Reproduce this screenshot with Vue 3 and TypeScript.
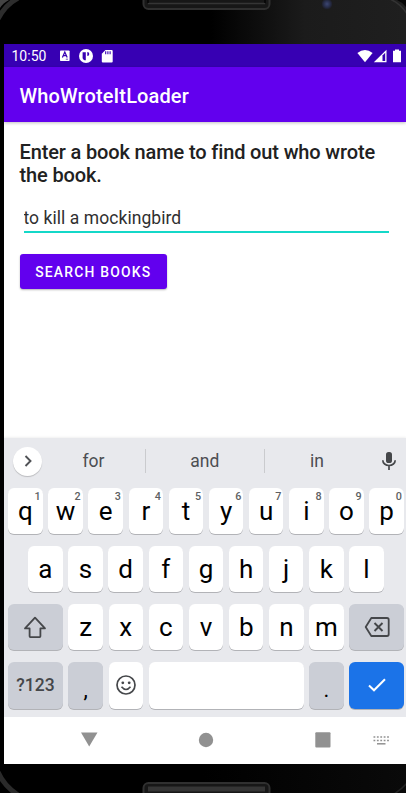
<script setup lang="ts">
import { ref } from 'vue'

interface Key {
  label: string
  hint?: string
}

const bookName = ref('to kill a mockingbird')
const suggestions: string[] = ['for', 'and', 'in']
const topRow: Key[] = [...'qwertyuiop'].map((label, i) => ({ label, hint: String((i + 1) % 10) }))
const middleRow: string[] = [...'asdfghjkl']
const bottomRow: string[] = [...'zxcvbnm']
</script>

<template>
  <div class="device">
    <svg class="frame" viewBox="0 0 406 793" aria-hidden="true">
      <defs>
        <linearGradient id="bezel" x1="0" x2="1">
          <stop offset="0.52" stop-color="#000" />
          <stop offset="0.75" stop-color="#1b1b1b" />
          <stop offset="1" stop-color="#1f1f1f" />
        </linearGradient>
        <linearGradient id="chin" x1="0" x2="1">
          <stop offset="0.5" stop-color="#000" />
          <stop offset="1" stop-color="#0a0a0a" />
        </linearGradient>
        <radialGradient id="lens">
          <stop offset="0" stop-color="#3c4672" />
          <stop offset="0.6" stop-color="#272d49" />
          <stop offset="1" stop-color="#1c1c22" />
        </radialGradient>
      </defs>
      <rect width="406" height="793" fill="#000" />
      <rect width="406" height="44" fill="url(#bezel)" />
      <rect y="764" width="406" height="29" fill="url(#chin)" />
      <path d="M-2 19Q5 5 18-2" fill="none" stroke="#2d2d2d" stroke-width="5" />
      <path d="M0 0h9Q3 3 0 8z" fill="#444" />
      <path d="M390-1Q401 4 407 14" fill="none" stroke="#333" stroke-width="1.5" />
      <path d="M397 0h9v7Q402 2 397 0z" fill="#050505" />
      <path d="M-2 772Q4 786 18 795" fill="none" stroke="#2a2a2a" stroke-width="5" />
      <path d="M407 783Q402 789 394 794" fill="none" stroke="#222" stroke-width="1.5" />
      <rect x="143.5" y="-10" width="126" height="19" rx="5" fill="#171717" stroke="#303030" stroke-width="2" />
      <path d="M148 3.5h117" stroke="#353535" stroke-width="1.5" />
      <path d="M148 0v3M265 0v3" stroke="#050505" stroke-width="1.5" />
      <rect x="143.5" y="783" width="126" height="18" rx="5" fill="#171717" stroke="#303030" stroke-width="2" />
      <rect x="148" y="786.5" width="117" height="5" fill="#353535" />
      <circle cx="327" cy="4" r="5.5" fill="url(#lens)" />
    </svg>

    <main class="screen">
      <div class="status-bar">
        <span class="clock">10:50</span>
        <svg class="notify" viewBox="0 0 56 16">
          <rect x="1" y="2.5" width="9.6" height="10.5" rx="0.8" fill="#fff" />
          <path d="M3.4 9.6L5.8 4l2.4 5.6M4.4 7.7h2.9" fill="none" stroke="#3700b3" stroke-width="1.2" />
          <path d="M6.8 11.2h2.2" stroke="#3700b3" stroke-width="0.7" />
          <circle cx="27" cy="8" r="7" fill="#fff" />
          <path d="M23.6 4.3h3.2v7.9h-1.3a4 4 0 0 1-1.9-2zM28.3 4a2 2 0 1 1 0 4z" fill="#3700b3" />
          <path d="M46.5 2h6.2q1 0 1 1v10.4q0 1-1 1h-8.9q-1 0-1-1V5.7z" fill="#fff" />
          <path d="M46.7 3.3v2.9M48.9 3.3v2.9M51.1 3.3v2.9" stroke="#3700b3" stroke-width="1.1" />
        </svg>
        <svg class="signals" viewBox="0 0 46 16">
          <path d="M1.4 5Q9 -0.8 16.6 5L9 14.3z" fill="#fff" />
          <path d="M30.5 1.700V14.300H17.800z" fill="#fff" />
          <path d="M26.500 7.500l2.700-2.800v8.400h-2.700z" fill="#3700b3" />
          <path d="M37 2.700h2V1.500h4v1.200h2v11.600h-8z" fill="#fff" />
        </svg>
      </div>
      <header class="app-bar"><h1>WhoWroteItLoader</h1></header>

      <section class="content">
        <h2>Enter a book name to find out who wrote the book.</h2>
        <input v-model="bookName" class="book-input" type="text" spellcheck="false" />
        <button class="search" type="button">SEARCH BOOKS</button>
      </section>

      <section class="keyboard">
        <div class="suggestions">
          <span class="expand">
            <svg width="12" height="14" viewBox="0 0 12 14"><path d="M3.5 2L8.5 7l-5 5" fill="none" stroke="#505256" stroke-width="1.9" /></svg>
          </span>
          <div class="words">
            <span v-for="word in suggestions" :key="word" class="word">{{ word }}</span>
          </div>
          <svg class="mic" width="16" height="20" viewBox="0 0 16 20">
            <rect x="5" y="1" width="6" height="11" rx="2.6" fill="#45474a" />
            <path d="M1.8 9.3a6.2 5.2 0 0 0 12.4 0M8 14.5V19" fill="none" stroke="#45474a" stroke-width="1.7" />
          </svg>
        </div>

        <div class="row">
          <span v-for="key in topRow" :key="key.label" class="key">{{ key.label }}<small>{{ key.hint }}</small></span>
        </div>
        <div class="row inset">
          <span v-for="letter in middleRow" :key="letter" class="key">{{ letter }}</span>
        </div>
        <div class="row">
          <span class="key wide muted">
            <svg width="24" height="24" viewBox="0 0 24 24"><path d="M12 2.7L22 13.4h-4.600v7.900q0 .8-.8.8H7.400q-.8 0-.8-.8v-7.900H2z" fill="none" stroke="#45474a" stroke-width="1.8" stroke-linejoin="round" /></svg>
          </span>
          <span v-for="letter in bottomRow" :key="letter" class="key">{{ letter }}</span>
          <span class="key wide muted">
            <svg width="26" height="22" viewBox="0 0 26 22"><path d="M7.300 2H23q1.700 0 1.700 1.700v14.600Q24.700 20 23 20H7.300L1.700 11z" fill="none" stroke="#45474a" stroke-width="1.800" stroke-linejoin="round" /><path d="M10.500 7l8 8m0-8l-8 8" stroke="#45474a" stroke-width="1.900" /></svg>
          </span>
        </div>
        <div class="row last">
          <span class="key wide muted symbols">?123</span>
          <span class="key muted punctuation">,</span>
          <span class="key">
            <svg width="22" height="22" viewBox="0 0 22 22"><circle cx="11" cy="11" r="9" fill="none" stroke="#45474a" stroke-width="1.700" /><circle cx="7.800" cy="8.800" r="1.400" fill="#45474a" /><circle cx="14.200" cy="8.800" r="1.400" fill="#45474a" /><path d="M6.500 12.800q4.500 5.500 9 0" fill="none" stroke="#45474a" stroke-width="1.600" /></svg>
          </span>
          <span class="key space"></span>
          <span class="key muted punctuation">.</span>
          <span class="key wide enter">
            <svg width="20" height="16" viewBox="0 0 20 16"><path d="M2 8.500l5 4.800L18 2.200" fill="none" stroke="#fff" stroke-width="2" /></svg>
          </span>
        </div>
      </section>

      <nav class="nav-bar">
        <svg viewBox="0 0 402 47">
          <path d="M77 15.500h16.500L85.200 29.500z" fill="#919191" />
          <circle cx="202" cy="23" r="7.200" fill="#919191" />
          <rect x="311.300" y="15.300" width="15.200" height="15.200" rx="1" fill="#919191" />
          <path d="M369.500 20h16M369.500 23.500h16" stroke="#919191" stroke-width="1.600" stroke-dasharray="1.800 1.600" />
          <path d="M373 26.800h8.500" stroke="#919191" stroke-width="1.500" />
        </svg>
      </nav>
    </main>
  </div>
</template>

<style>
body {
  margin: 0;
  overflow: hidden;
}
</style>

<style scoped>
.device {
  position: relative;
  box-sizing: border-box;
  width: 406px;
  height: 793px;
  padding: 44px 0 29px 4px;
  overflow: hidden;
  font-family: Roboto, sans-serif;
}
.frame {
  position: absolute;
  inset: 0;
  width: 406px;
  height: 793px;
}
.screen {
  position: relative;
  display: flex;
  flex-direction: column;
  height: 720px;
  background: #fff;
}
.status-bar {
  display: flex;
  align-items: center;
  flex: 0 0 23px;
  box-sizing: border-box;
  padding: 1px 4px 0 7.500px;
  background: #3700b3;
  color: #fff;
}
.clock {
  width: 46px;
  font-size: 14px;
  line-height: 22px;
}
.notify {
  width: 56px;
  height: 16px;
  margin-left: 1px;
}
.signals {
  width: 46px;
  height: 16px;
  margin-left: auto;
}
.app-bar {
  display: flex;
  align-items: center;
  flex: 0 0 55px;
  padding: 2px 15.500px 0;
  box-sizing: border-box;
  background: #6200ee;
  color: #fff;
  box-shadow: 0 1px 3px rgba(0, 0, 0, 0.25);
}
h1 {
  margin: 0;
  font-size: 20px;
  font-weight: 500;
  line-height: 24px;
  letter-spacing: 0.130px;
}
.content {
  display: flex;
  flex: 1;
  flex-direction: column;
  align-items: flex-start;
  padding: 19px 15.500px 0;
}
h2 {
  margin: 0;
  color: #212121;
  font-size: 20px;
  font-weight: 500;
  line-height: 23px;
  letter-spacing: -0.140px;
}
.book-input {
  box-sizing: border-box;
  width: 365px;
  height: 28px;
  margin: 18px 0 0 4px;
  padding: 0 0 1px;
  border: 0;
  border-bottom: 2px solid #14d8c8;
  outline: 0;
  background: none;
  color: #303030;
  font: 17.500px Roboto, sans-serif;
  letter-spacing: 0.060px;
}
.search {
  width: 147.500px;
  height: 35px;
  margin-top: 21px;
  padding: 0;
  border: 0;
  border-radius: 3px;
  background: #6200ee;
  color: #fff;
  box-shadow: 0 1px 2px rgba(0, 0, 0, 0.3);
  font: 500 13.900px Roboto, sans-serif;
  letter-spacing: 1.200px;
}
.keyboard {
  display: flex;
  flex: 0 0 279px;
  flex-direction: column;
  gap: 12px;
  box-sizing: border-box;
  padding: 0 2px 0 4.200px;
  background: #e8e9ed;
  box-shadow: 0 -1px 2px rgba(0, 0, 0, 0.06);
}
.suggestions {
  display: flex;
  align-items: center;
  height: 46px;
  margin-bottom: -8px;
}
.expand {
  display: grid;
  place-items: center;
  width: 29px;
  height: 29px;
  margin-left: 5.200px;
  border-radius: 50%;
  background: #fff;
  box-shadow: 0 1px 1px rgba(0, 0, 0, 0.2);
}
.words {
  display: grid;
  grid-template-columns: 103px 120px 104px;
  margin-left: -0.500px;
}
.word {
  color: #4c4e52;
  font-size: 17.500px;
  line-height: 24px;
  text-align: center;
}
.word:nth-child(2) {
  border: solid #cacbce;
  border-width: 0 1px;
}
.mic {
  margin-left: 12.500px;
}
.row {
  display: flex;
  gap: 5.750px;
  height: 46px;
}
.inset {
  padding: 0 20px;
}
.last {
  height: 47px;
}
.key {
  position: relative;
  display: flex;
  align-items: center;
  justify-content: center;
  flex: 0 0 34.400px;
  box-sizing: border-box;
  padding-bottom: 1px;
  border-radius: 6px;
  background: #fff;
  box-shadow: 0 1px 0.500px #b2b3b7;
  color: #000;
  font-size: 26px;
}
.key small {
  position: absolute;
  top: 2px;
  right: 2px;
  color: #5d5f63;
  font-size: 10.800px;
  font-weight: 500;
  line-height: 13px;
}
.wide {
  flex-basis: 54.500px;
}
.muted {
  background: #cbced6;
}
.symbols {
  color: #45474a;
  font-size: 17.500px;
  font-weight: 500;
}
.punctuation {
  align-items: flex-end;
  padding-bottom: 7px;
  font-size: 22px;
}
.space {
  flex-basis: 154.800px;
}
.enter {
  background: #1b73e8;
}
.nav-bar {
  flex: 0 0 47px;
  background: #fff;
}
.nav-bar svg {
  display: block;
  width: 402px;
  height: 47px;
}
</style>
